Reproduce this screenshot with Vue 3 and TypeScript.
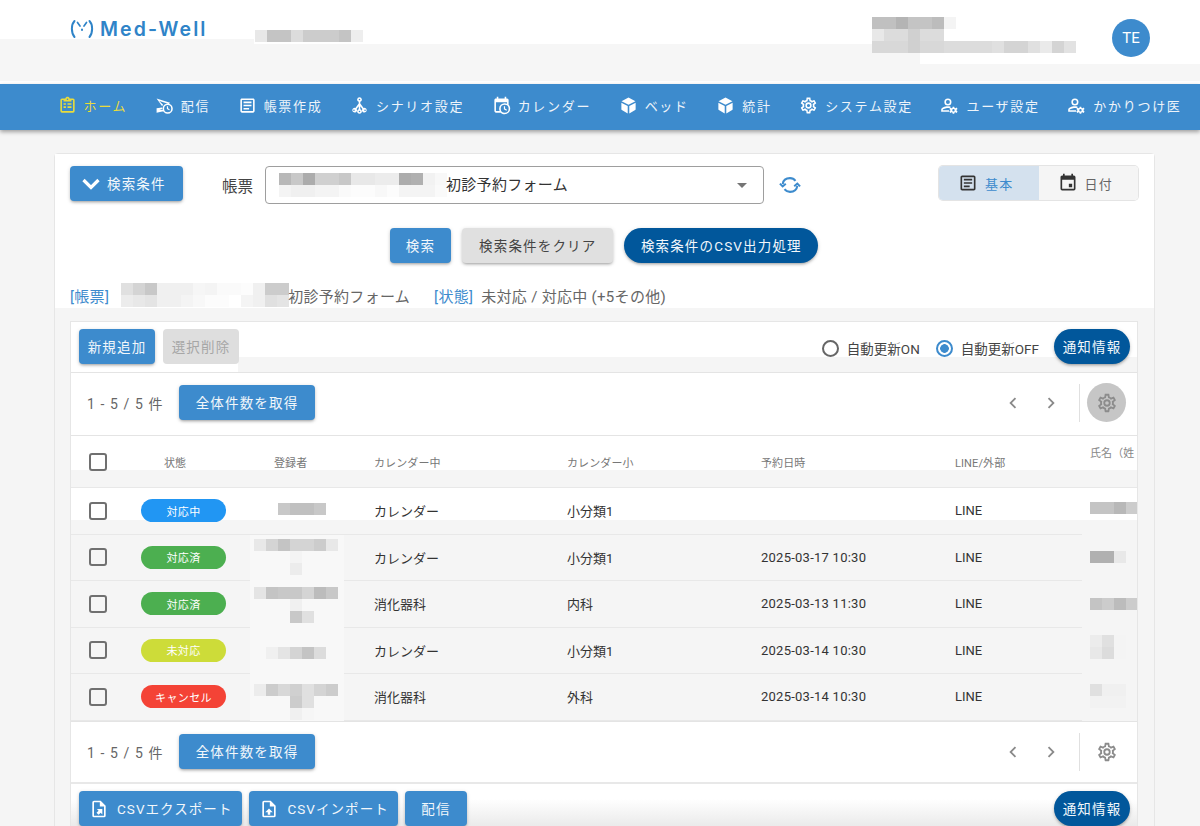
<script setup lang="ts">
import { h } from 'vue'

// blurred-out text in the screenshot, each value is one grey cell
const Mosaic = (props: { rows: string[] }) =>
  h(
    'span',
    { class: 'mosaic' },
    props.rows.map((row) =>
      h(
        'span',
        { class: 'mosaic-row' },
        row.split(' ').map((v) =>
          h('i', { style: { background: v === '--' ? 'transparent' : `#${v}${v}${v}` } }),
        ),
      ),
    ),
  )
Mosaic.props = ['rows']

const cogOutline =
  'M12,8A4,4 0 0,1 16,12A4,4 0 0,1 12,16A4,4 0 0,1 8,12A4,4 0 0,1 12,8M12,10A2,2 0 0,0 10,12A2,2 0 0,0 12,14A2,2 0 0,0 14,12A2,2 0 0,0 12,10M10,22C9.75,22 9.54,21.82 9.5,21.58L9.13,18.93C8.5,18.68 7.96,18.34 7.44,17.94L4.95,18.95C4.73,19.03 4.46,18.95 4.34,18.73L2.34,15.27C2.21,15.05 2.27,14.78 2.46,14.63L4.57,12.97L4.5,12L4.57,11L2.46,9.37C2.27,9.22 2.21,8.95 2.34,8.73L4.34,5.27C4.46,5.05 4.73,4.96 4.95,5.05L7.44,6.05C7.96,5.66 8.5,5.32 9.13,5.07L9.5,2.42C9.54,2.18 9.75,2 10,2H14C14.25,2 14.46,2.18 14.5,2.42L14.87,5.07C15.5,5.32 16.04,5.66 16.56,6.05L19.05,5.05C19.27,4.96 19.54,5.05 19.66,5.27L21.66,8.73C21.79,8.95 21.73,9.22 21.54,9.37L19.43,11L19.5,12L19.43,13L21.54,14.63C21.73,14.78 21.79,15.05 21.66,15.27L19.66,18.73C19.54,18.95 19.27,19.04 19.05,18.95L16.56,17.95C16.04,18.34 15.5,18.68 14.87,18.93L14.5,21.58C14.46,21.82 14.25,22 14,22H10M11.25,4L10.88,6.61C9.68,6.86 8.62,7.5 7.85,8.39L5.44,7.35L4.69,8.65L6.8,10.2C6.4,11.37 6.4,12.64 6.8,13.8L4.68,15.36L5.43,16.66L7.86,15.62C8.63,16.5 9.68,17.14 10.87,17.38L11.24,20H12.76L13.13,17.39C14.32,17.14 15.37,16.5 16.14,15.62L18.57,16.66L19.32,15.36L17.2,13.81C17.6,12.64 17.6,11.37 17.2,10.2L19.31,8.65L18.56,7.35L16.15,8.39C15.38,7.5 14.32,6.86 13.13,6.62L12.75,4H11.25Z'
const textBox =
  'M5,3C3.89,3 3,3.89 3,5V19C3,20.11 3.89,21 5,21H19C20.11,21 21,20.11 21,19V5C21,3.89 20.11,3 19,3H5M5,5H19V19H5V5M7,7V9H17V7H7M7,11V13H17V11H7M7,15V17H14V15H7Z'
const clipboard =
  'M19,3H14.82C14.4,1.84 13.3,1 12,1C10.7,1 9.6,1.84 9.18,3H5A2,2 0 0,0 3,5V19A2,2 0 0,0 5,21H19A2,2 0 0,0 21,19V5A2,2 0 0,0 19,3M12,3A1,1 0 0,1 13,4A1,1 0 0,1 12,5A1,1 0 0,1 11,4A1,1 0 0,1 12,3M7,7H17V5H19V19H5V5H7V7M12,11H17V9H12V11M12,15H17V13H12V15M7,11H10V9H7V11M7,15H10V13H7V15Z'
const sendClock =
  'M2,3L19,8.5L17.6,10.2L5.4,6.2L10.2,10.9A7,7 0 0,0 9,13L2,3M2,21V15.5L8.9,14.6A7,7 0 0,0 9.2,16.4L5.6,17.2L9.8,17.6A7,7 0 0,0 10.6,19.2L2,21M16,9.5A6.5,6.5 0 1,1 16,22.5A6.5,6.5 0 1,1 16,9.5M16,11.5A4.5,4.5 0 1,0 16,20.5A4.5,4.5 0 1,0 16,11.5M15,12.8H16.5V15.6L18.7,16.9L18,18.1L15,16.4V12.8Z'
const tree =
  'M12,1.5A3,3 0 0,1 13,7.33V9.6L17.2,15.1A3,3 0 1,1 15.6,16.3L13,12.9V16.7A3,3 0 1,1 11,16.7V12.9L8.4,16.3A3,3 0 1,1 6.8,15.1L11,9.6V7.33A3,3 0 0,1 12,1.5M12,3.5A1,1 0 1,0 12,5.5A1,1 0 1,0 12,3.5M5,17A1,1 0 1,0 5,19A1,1 0 1,0 5,17M12,18.5A1,1 0 1,0 12,20.5A1,1 0 1,0 12,18.5M19,17A1,1 0 1,0 19,19A1,1 0 1,0 19,17Z'
const calendarClock =
  'M15,13H16.5V15.82L18.94,17.23L18.19,18.53L15,16.69V13M19,8H5V19H9.67C9.24,18.09 9,17.07 9,16A7,7 0 0,1 16,9C17.07,9 18.09,9.24 19,9.67V8M5,21C3.89,21 3,20.1 3,19V5C3,3.89 3.89,3 5,3H6V1H8V3H16V1H18V3H19A2,2 0 0,1 21,5V11.1C22.24,12.36 23,14.09 23,16A7,7 0 0,1 16,23C14.09,23 12.36,22.24 11.1,21H5M16,11A5,5 0 0,0 11,16A5,5 0 0,0 16,21A5,5 0 0,0 21,16A5,5 0 0,0 16,11Z'
const cube =
  'M12,1.8L20.8,6.6L12,11.2L3.2,6.6L12,1.8M3,8.4L11,12.6V22L3.6,17.8C3.2,17.6 3,17.2 3,16.8V8.4M21,8.4V16.8C21,17.2 20.8,17.6 20.4,17.8L13,22V12.6L21,8.4Z'
const accountCog =
  'M10,3A4.5,4.5 0 0,0 5.5,7.5A4.5,4.5 0 0,0 10,12A4.5,4.5 0 0,0 14.5,7.5A4.5,4.5 0 0,0 10,3M10,5A2.5,2.5 0 0,1 12.5,7.5A2.5,2.5 0 0,1 10,10A2.5,2.5 0 0,1 7.5,7.5A2.5,2.5 0 0,1 10,5M10,13C6,13 1.5,14.8 1.5,17.5V20H11.5V18H3.5V17.5C3.5,16.3 7,15 10,15C10.8,15 11.6,15.1 12.4,15.2L13.5,13.5C12.3,13.2 11.1,13 10,13M18,13.5L18.4,15.1L19.6,15.4L21,14.6L22.2,16.4L21,17.4V18.6L22.2,19.6L21,21.4L19.6,20.6L18.4,20.9L18,22.5H16L15.6,20.9L14.4,20.6L13,21.4L11.8,19.6L13,18.6V17.4L11.8,16.4L13,14.6L14.4,15.4L15.6,15.1L16,13.5H18M17,16.5A1.5,1.5 0 1,0 17,19.5A1.5,1.5 0 1,0 17,16.5Z'
const chevronLeft = 'M15.41,16.58L10.83,12L15.41,7.41L14,6L8,12L14,18L15.41,16.58Z'
const chevronRight = 'M8.59,16.58L13.17,12L8.59,7.41L10,6L16,12L10,18L8.59,16.58Z'
const calendarToday =
  'M13,13H17V17H13V13M19,19H5V8H19M19,3H18V1H16V3H8V1H6V3H5C3.89,3 3,3.9 3,5V19A2,2 0 0,0 5,21H19A2,2 0 0,0 21,19V5A2,2 0 0,0 19,3Z'
const fileExport =
  'M14,2L20,8V20A2,2 0 0,1 18,22H6A2,2 0 0,1 4,20V4A2,2 0 0,1 6,2H14M18,20V9H13V4H6V20H18M9.5,12H16V18.5L14,16.5L11.5,19L9,16.5L11.5,14L9.5,12Z'
const fileImport =
  'M14,2L20,8V20A2,2 0 0,1 18,22H6A2,2 0 0,1 4,20V4A2,2 0 0,1 6,2H14M18,20V9H13V4H6V20H18M12,11.5L16.5,16H13.5V19H10.5V16H7.5L12,11.5Z'

const navItems = [
  { label: 'ホーム', icon: clipboard, active: true },
  { label: '配信', icon: sendClock },
  { label: '帳票作成', icon: textBox },
  { label: 'シナリオ設定', icon: tree },
  { label: 'カレンダー', icon: calendarClock },
  { label: 'ベッド', icon: cube },
  { label: '統計', icon: cube },
  { label: 'システム設定', icon: cogOutline },
  { label: 'ユーザ設定', icon: accountCog },
  { label: 'かかりつけ医', icon: accountCog },
]

const columns = ['状態', '登録者', 'カレンダー中', 'カレンダー小', '予約日時', 'LINE/外部']

const rows = [
  {
    status: '対応中', tone: 'blue', mid: 'カレンダー', small: '小分類1', date: '', shift: 'r1',
    who: ['-- -- c8 c0 c0 c8'],
    name: ['c4 c4 b8 cc'],
  },
  {
    status: '対応済', tone: 'green', mid: 'カレンダー', small: '小分類1', date: '2025-03-17 10:30', shift: 'r2',
    who: ['e8 d4 c4 d4 d4 cc e8', '-- -- -- f4', '-- -- -- ec', '-- -- -- f8'],
    name: ['b0 b0 e8'],
  },
  {
    status: '対応済', tone: 'green', mid: '消化器科', small: '内科', date: '2025-03-13 11:30', shift: 'r3',
    who: ['e4 c4 c8 c8 d4 bc c8', '-- -- -- f0', '-- -- -- c8 e0'],
    name: ['c4 cc bc cc'],
  },
  {
    status: '未対応', tone: 'lime', mid: 'カレンダー', small: '小分類1', date: '2025-03-14 10:30', shift: 'r4',
    who: ['-- f0 e4 d4 c4 dc'],
    name: ['ec e0 f4', 'e8 dc f4'],
  },
  {
    status: 'キャンセル', tone: 'red', mid: '消化器科', small: '外科', date: '2025-03-14 10:30', shift: 'r5',
    who: ['ec cc d8 d0 e0 d4 cc', '-- -- -- cc e0', '-- -- -- f0 f6'],
    name: ['e0 f0 f0', 'f2 f2 f2'],
  },
]
</script>

<template>
  <div class="page">
    <header class="top">
      <div class="logo">
        <svg class="logo-mark" viewBox="0 0 26 20" fill="none" stroke="#2f84c8" stroke-width="2" stroke-linecap="round">
          <path d="M5.5 2C2 5.5 2 14 5.5 18" />
          <path d="M20.5 2C24 5.5 24 14 20.5 18" />
          <path d="M8.5 3.5L11 7" stroke-width="1.7" />
          <path d="M17.5 3.5L15 7" stroke-width="1.7" />
          <path d="M13 10.5V11" />
        </svg>
        <span class="logo-text">Med-Well</span>
      </div>
      <Mosaic class="top-title" :rows="['e8 c4 c4 dc cc cc cc c4 ee']" />
      <Mosaic
        class="top-user"
        :rows="[
          'c0 c0 b4 c4 c4 bc f4',
          'e8 dc dc d0 dc dc',
          'd8 d8 d8 d0 d8 d8 dc dc dc dc e0 d4 d4 e0 ea d4 e2',
        ]"
      />
      <div class="avatar">TE</div>
    </header>

    <nav class="nav">
      <a v-for="item in navItems" :key="item.label" class="nav-item" :class="{ active: item.active }">
        <svg viewBox="0 0 24 24"><path :d="item.icon" /></svg>
        <span>{{ item.label }}</span>
      </a>
    </nav>

    <main class="main">
      <div class="outer">
        <section class="search-card">
          <div class="search-top">
            <button class="btn primary cond-btn">
              <svg viewBox="0 0 24 24"><path d="M4.5 8L12 15.5L19.5 8" fill="none" stroke="#fff" stroke-width="3.2" /></svg>
              検索条件
            </button>
            <span class="form-label">帳票</span>
            <div class="select">
              <Mosaic
                class="select-blur"
                :rows="['b8 c8 ac d0 d0 c8 e8 e8 ec ec ac b0 f2 f8', 'f4 f0 f0 f4 f4 fa fc fc f8 fc f4 f4 f4 fa']"
              />
              <span class="select-text">初診予約フォーム</span>
              <span class="caret"></span>
            </div>
            <svg class="sync" viewBox="0 0 24 24" fill="none" stroke="#3d8bcd" stroke-width="2.2">
              <path d="M4 11C4.6 6.8 8 4.5 12 4.5C14.6 4.5 16.6 5.6 18 7.4" />
              <path d="M20 13C19.4 17.2 16 19.5 12 19.5C9.4 19.5 7.4 18.4 6 16.6" />
              <path d="M1 10.5L4 13.6L7.4 10.6" />
              <path d="M23 13.5L20 10.4L16.6 13.4" />
            </svg>
            <div class="toggle">
              <div class="toggle-item on">
                <svg viewBox="0 0 24 24"><path :d="textBox" /></svg>基本
              </div>
              <div class="toggle-item">
                <svg viewBox="0 0 24 24"><path :d="calendarToday" /></svg>日付
              </div>
            </div>
          </div>

          <div class="search-actions">
            <button class="btn primary">検索</button>
            <button class="btn plain">検索条件をクリア</button>
            <button class="btn dark pill">検索条件のCSV出力処理</button>
          </div>

          <div class="summary">
            <span class="tag">[帳票]</span>
            <Mosaic class="summary-blur" :rows="['e0 d4 c8 f0 f0 f0 f6 f4 fa fa fc f0 cc cc', 'ec e8 e4 f0 f0 f4 f8 fc fc ff f4 f0 e0 e4']" />
            <span class="summary-form">初診予約フォーム</span>
            <span class="tag">[状態]</span>
            <span>未対応 / 対応中 (+5その他)</span>
          </div>
        </section>

        <section class="list-card">
          <div class="list-tools">
            <button class="btn primary small">新規追加</button>
            <button class="btn disabled small">選択削除</button>
            <div class="radios">
              <label class="radio"><i></i>自動更新ON</label>
              <label class="radio checked"><i></i>自動更新OFF</label>
            </div>
            <button class="btn dark pill small">通知情報</button>
          </div>

          <div class="pager">
            <span class="count">1 - 5 / 5 件</span>
            <button class="btn primary">全体件数を取得</button>
            <svg class="chev first" viewBox="0 0 24 24"><path :d="chevronLeft" /></svg>
            <svg class="chev" viewBox="0 0 24 24"><path :d="chevronRight" /></svg>
            <span class="pager-sep"></span>
            <span class="gear-btn bg"><svg viewBox="0 0 24 24"><path :d="cogOutline" /></svg></span>
          </div>

          <div class="table">
            <div class="row head">
              <div class="cell"><span class="checkbox"></span></div>
              <div v-for="(col, i) in columns" :key="col" class="cell" :class="'hc' + i">{{ col }}</div>
              <div class="cell name-head">氏名（姓</div>
            </div>
            <div v-for="(r, i) in rows" :key="i" class="row" :class="r.shift">
              <div class="cell"><span class="checkbox"></span></div>
              <div class="cell"><span class="chip" :class="r.tone">{{ r.status }}</span></div>
              <div class="cell who"><Mosaic :rows="r.who" /></div>
              <div class="cell">{{ r.mid }}</div>
              <div class="cell">{{ r.small }}</div>
              <div class="cell date">{{ r.date }}</div>
              <div class="cell">LINE</div>
              <div class="cell name"><Mosaic :rows="r.name" /></div>
            </div>
          </div>

          <div class="pager bottom">
            <span class="count">1 - 5 / 5 件</span>
            <button class="btn primary">全体件数を取得</button>
            <svg class="chev first" viewBox="0 0 24 24"><path :d="chevronLeft" /></svg>
            <svg class="chev" viewBox="0 0 24 24"><path :d="chevronRight" /></svg>
            <span class="pager-sep"></span>
            <span class="gear-btn"><svg viewBox="0 0 24 24"><path :d="cogOutline" /></svg></span>
          </div>

          <div class="list-actions">
            <button class="btn primary act export">
              <svg viewBox="0 0 24 24"><path :d="fileExport" /></svg>CSVエクスポート
            </button>
            <button class="btn primary act">
              <svg viewBox="0 0 24 24"><path :d="fileImport" /></svg>CSVインポート
            </button>
            <button class="btn primary">配信</button>
            <button class="btn dark pill small push">通知情報</button>
          </div>
        </section>
      </div>
    </main>
  </div>
</template>

<style scoped>
.page {
  width: 1200px;
  height: 826px;
  overflow: hidden;
  background: #f5f5f5;
  color: #555;
  font-family: Roboto, "Noto Sans CJK JP", sans-serif;
}

.top {
  height: 84px;
  box-sizing: border-box;
  display: flex;
  align-items: flex-start;
  padding-right: 50px;
  background:
    linear-gradient(#fff, #fff) 0 0 / 100% 39px no-repeat,
    linear-gradient(#fff, #fff) 254px 0 / 100% 44px no-repeat,
    linear-gradient(#fff, #fff) 920px 0 / 100% 64px no-repeat,
    linear-gradient(#fff, #fff) 0 81px / 100% 3px no-repeat,
    #f6f6f6;
}

.logo {
  display: flex;
  align-items: center;
  margin: 19px 0 0 69px;
  gap: 5px;
}

.logo-mark {
  width: 26px;
  height: 20px;
}

.logo-text {
  font-family: Inter, sans-serif;
  font-size: 19.5px;
  font-weight: 600;
  letter-spacing: 2.1px;
  line-height: 20px;
  color: #2f84c8;
}

.top-title {
  margin: 30px 0 0 47px;
}

.top-user {
  margin: 17px 0 0 509px;
}

.avatar {
  width: 38px;
  height: 38px;
  margin: 19px 0 0 auto;
  border-radius: 50%;
  background: #3d8bcd;
  color: #fff;
  font-size: 15px;
  display: flex;
  align-items: center;
  justify-content: center;
}

.nav {
  height: 46px;
  box-sizing: border-box;
  display: flex;
  align-items: center;
  gap: 27.5px;
  padding: 0 0 3px 57.5px;
  background: #3d8bcd;
  box-shadow: 0 2px 4px rgba(0, 0, 0, 0.35);
  position: relative;
}

.nav-item {
  display: flex;
  align-items: center;
  gap: 7px;
  color: #eef4fa;
  font-size: 13px;
  letter-spacing: 1.7px;
  white-space: nowrap;
}

.nav-item svg {
  width: 19px;
  height: 19px;
  fill: #fff;
  flex: none;
}

.nav-item.active {
  color: #e9dc3c;
}

.nav-item.active svg {
  fill: #e9dc3c;
}

.main {
  padding: 23px 0 0 54px;
}

.outer {
  width: 1101px;
  height: 700px;
  box-sizing: border-box;
  border: 1px solid #e6e6e6;
  border-radius: 4px 4px 0 0;
}

.search-card {
  height: 154px;
  box-sizing: border-box;
  padding: 12px 16px 0 15px;
  background: #fff;
}

.search-top {
  display: flex;
  align-items: flex-start;
}

.btn {
  height: 35px;
  padding: 0 16.5px 2px;
  border: 0;
  border-radius: 4px;
  font: inherit;
  font-size: 13.5px;
  letter-spacing: 1.16px;
  white-space: nowrap;
  display: inline-flex;
  align-items: center;
  justify-content: center;
  box-shadow: 0 2px 3px -1px rgba(0, 0, 0, 0.3), 0 1px 4px rgba(0, 0, 0, 0.14);
}

.btn.primary {
  background: #3d8bcd;
  color: #f2f7fb;
}

.btn.plain {
  padding: 0 17px 2px;
  background: #e0e0e0;
  color: #444;
}

.btn.dark {
  background: #01579b;
  color: #f2f7fb;
}

.btn.pill {
  border-radius: 18px;
}

.btn.disabled {
  background: #dedede;
  color: #a6a6a6;
  box-shadow: none;
}

.btn.small {
  padding: 0 0 2px;
  width: 76px;
}

.btn.cond-btn {
  width: 113px;
  justify-content: flex-start;
  padding: 0 0 2px 9px;
  gap: 4px;
}

.cond-btn svg {
  width: 24px;
  height: 24px;
  margin-top: 2px;
}

.form-label {
  margin: 8px 12px 0 39px;
  font-size: 15.5px;
  color: #444;
}

.select {
  width: 499px;
  height: 38px;
  box-sizing: border-box;
  display: flex;
  align-items: center;
  padding: 0 13px 3px;
  border: 1px solid #9e9e9e;
  border-radius: 4px;
}

.select-text {
  margin-left: -1px;
  font-size: 15px;
  letter-spacing: 0.3px;
  color: #333;
}

.select-blur {
  margin-top: 3px;
  flex: none;
}

.caret {
  margin: 3px 3px 0 auto;
  border: 5px solid transparent;
  border-top: 5px solid #757575;
  border-bottom: 0;
}

.sync {
  width: 22px;
  height: 22px;
  margin: 8px 0 0 15px;
}

.toggle {
  display: flex;
  width: 199px;
  height: 34px;
  margin-left: auto;
  border-radius: 4px;
  overflow: hidden;
  box-shadow: 0 0 0 1px #e4e4e4;
}

.toggle-item {
  flex: 1;
  display: flex;
  align-items: center;
  justify-content: center;
  gap: 7px;
  padding-right: 6px;
  font-size: 13px;
  letter-spacing: 1.16px;
  color: #666;
  background: #f5f5f5;
}

.toggle-item svg {
  width: 20px;
  height: 20px;
  fill: #333;
}

.toggle-item.on {
  background: #d4e1ee;
  color: #3d8bcd;
}

.search-actions {
  display: flex;
  justify-content: center;
  gap: 11px;
  margin-top: 24px;
}

.search-actions .btn.primary {
  padding: 0 16px 2px;
}

.summary {
  display: flex;
  align-items: center;
  height: 24px;
  margin-top: 20px;
  font-size: 15px;
  letter-spacing: 0.3px;
  color: #666;
  white-space: nowrap;
}

.tag {
  color: #3d8bcd;
  margin-right: 8px;
}

.summary-blur {
  margin: 0 0 0 4px;
}

.summary-form {
  margin: 0 24px 0 -1px;
}

.list-card {
  width: 1068px;
  margin: 13px 0 0 15px;
  background: #fff;
  border: 1px solid #e6e6e6;
  border-bottom: 0;
  box-sizing: border-box;
}

.list-tools {
  height: 51px;
  box-sizing: border-box;
  display: flex;
  align-items: flex-start;
  gap: 8px;
  padding: 7px 7px 0 8px;
  border-bottom: 1px solid #e4e4e4;
  background:
    linear-gradient(#fff, #fff) 167px 0 / 100% 35px no-repeat,
    linear-gradient(to right, #fff 167px, #f5f5f5 167px);
}

.radios {
  margin-left: auto;
  display: flex;
  gap: 16px;
  padding-top: 9px;
  margin-right: 7px;
}

.radio {
  display: flex;
  align-items: center;
  gap: 8px;
  font-size: 13.5px;
  color: #444;
}

.radio i {
  width: 17px;
  height: 17px;
  box-sizing: border-box;
  border: 2px solid #666;
  border-radius: 50%;
}

.radio.checked i {
  border-color: #3d8bcd;
  background: radial-gradient(circle, #3d8bcd 0 4px, transparent 4.6px);
}

.pager {
  height: 63px;
  box-sizing: border-box;
  display: flex;
  align-items: center;
  padding: 0 11px 3px 0;
  border-bottom: 1px solid #e4e4e4;
  background: #fff;
}

.pager .btn {
  width: 136px;
  padding: 0 0 2px;
}

.count {
  width: 108px;
  padding-left: 16px;
  box-sizing: border-box;
  font-size: 14px;
  letter-spacing: 1.1px;
  color: #666;
}

.chev {
  width: 22px;
  height: 22px;
  fill: #8a8a8a;
  margin-left: 16px;
}

.chev.first {
  margin-left: auto;
}

.pager-sep {
  width: 1px;
  height: 38px;
  margin-left: 17px;
  background: #e0e0e0;
}

.gear-btn {
  width: 39px;
  height: 39px;
  margin-left: 7px;
  border-radius: 50%;
  display: flex;
  align-items: center;
  justify-content: center;
}

.gear-btn.bg {
  background: #c6c6c6;
}

.gear-btn svg {
  width: 22px;
  height: 22px;
  fill: #8c8c8c;
}

.table {
  height: 285px;
  overflow: hidden;
  font-size: 13px;
  color: #333;
}

.row {
  display: grid;
  grid-template-columns: 70px 113px 120px 193px 194px 194px 135px 60px;
  grid-template-rows: 45.5px;
  height: 46.5px;
  box-sizing: border-box;
  border-bottom: 1px solid #e8e8e8;
  background: #f5f5f5;
  align-items: center;
}

.row.head {
  grid-template-rows: 51px;
  height: 52px;
  font-size: 11px;
  color: #777;
  background: linear-gradient(#fff 34px, #f5f5f5 34px);
}

.row.r1 {
  background: linear-gradient(#fff 32px, #f5f5f5 32px);
}

.cell {
  white-space: nowrap;
}

.date {
  letter-spacing: 0.25px;
}

.head .cell {
  letter-spacing: 0.1px;
}

.hc0 {
  padding-left: 23px;
}

.hc1 {
  padding-left: 20px;
}

.head .name-head {
  align-self: start;
  margin-top: 8px;
  color: #888;
  overflow: hidden;
  width: 47px;
}

.checkbox {
  display: block;
  width: 18px;
  height: 18px;
  box-sizing: border-box;
  margin-left: 18px;
  border: 2px solid #707070;
  border-radius: 3px;
}

.chip {
  display: flex;
  align-items: center;
  justify-content: center;
  width: 85px;
  height: 23px;
  border-radius: 12px;
  font-size: 11px;
  letter-spacing: 0.4px;
  color: #fff;
}

.chip.blue {
  background: #2196f3;
}

.chip.green {
  background: #4caf50;
}

.chip.lime {
  background: #cddc39;
}

.chip.red {
  background: #f44336;
}

.who {
  align-self: stretch;
  box-sizing: border-box;
  width: 94px;
  height: 100%;
  margin-left: -4px;
  padding-left: 4px;
  background: #f8f8f8;
  box-shadow: 0 1px 0 #f8f8f8;
}

.r1 .who {
  padding-top: 15px;
  background: none;
  box-shadow: none;
}

.r2 .who {
  padding-top: 4px;
}

.r3 .who {
  padding-top: 6px;
}

.r4 .who {
  padding-top: 19px;
}

.r5 .who {
  padding-top: 10px;
}

.name {
  align-self: stretch;
  margin-left: -8px;
  padding: 14px 0 0 8px;
  box-shadow: 0 1px 0 #f5f5f5;
}

.r2 .name {
  padding-top: 16.5px;
}

.r3 .name {
  padding-top: 17px;
}

.r4 .name {
  padding-top: 7.5px;
}

.r5 .name {
  padding-top: 10px;
}

.pager.bottom {
  height: 63px;
  padding-bottom: 1px;
  border-top: 1px solid #e4e4e4;
  border-bottom: 2px solid #e8e8e8;
}

.list-actions {
  height: 60px;
  display: flex;
  align-items: flex-start;
  gap: 7px;
  padding: 7px 7px 0 8px;
  background: linear-gradient(#fff 15px, #e8e8e8 45px);
}

.btn.act {
  padding: 0 9px 2px 10px;
  letter-spacing: 1.05px;
}

.btn.act.export {
  padding-right: 10px;
}

.act svg {
  width: 20px;
  height: 20px;
  fill: #fff;
  margin: 2px 8px 0 0;
}

.push {
  margin-left: auto;
}
</style>

<style>
.mosaic {
  display: inline-flex;
  flex-direction: column;
  vertical-align: top;
}

.mosaic-row {
  display: flex;
  height: 12px;
}

.mosaic-row i {
  width: 12px;
  height: 12px;
  flex: none;
}
</style>
